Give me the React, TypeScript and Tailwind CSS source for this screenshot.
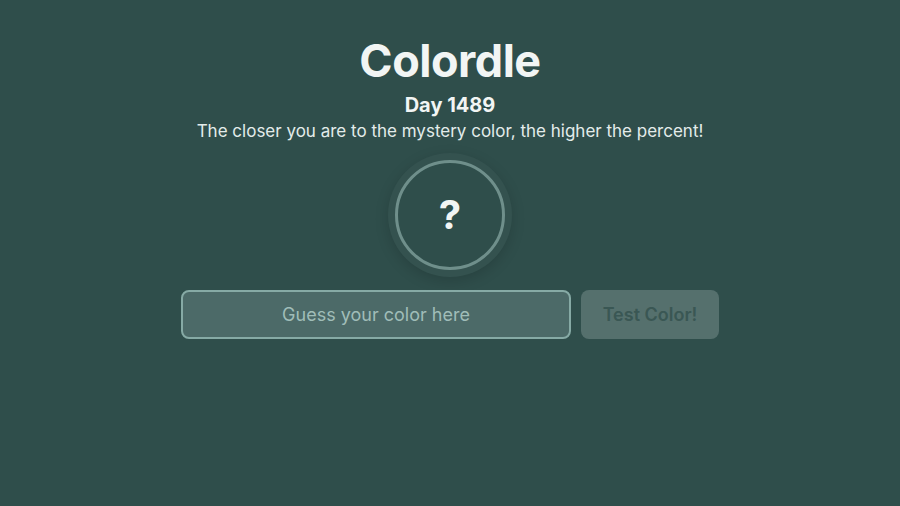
export default function App() {
  return (
    <div
      className="w-full h-[506px] bg-[#2f4e4b] flex flex-col items-center text-[#f2f5f4]"
      style={{ fontFamily: 'Inter, "Noto Sans", sans-serif' }}
    >
      <h1 className="mt-[35px] text-[45px] leading-[52px] font-bold tracking-[-0.5px]">Colordle</h1>
      <div className="mt-[6px] text-[20px] leading-[24px] font-bold">Day 1489</div>
      <p className="mt-[3px] text-[17px] leading-[22px] text-[#e3ecea]">
        The closer you are to the mystery color, the higher the percent!
      </p>

      {/* mystery colour circle */}
      <div className="mt-[11px] w-[124px] h-[124px] rounded-full bg-[#34524f] flex items-center justify-center shadow-[0_4px_14px_rgba(0,0,0,0.15)]">
        <div className="w-[110px] h-[110px] rounded-full border-[3px] border-[#6f8f8b] bg-[#2f4e4b] flex items-center justify-center">
          <span className="text-[40px] font-bold leading-none text-[#f2f5f4]">?</span>
        </div>
      </div>

      <div className="mt-[13px] flex gap-[10px]">
        <input
          type="text"
          placeholder="Guess your color here"
          className="w-[390px] h-[49px] rounded-[8px] border-2 border-[#86aaa5] bg-[#4c6a68] text-center text-[18px] text-[#f2f5f4] placeholder:text-[#a0bdb8] outline-none"
        />
        <button className="w-[138px] h-[49px] rounded-[8px] bg-[#55706d] text-[18px] font-semibold text-[#3a5754]">
          Test Color!
        </button>
      </div>
    </div>
  );
}
